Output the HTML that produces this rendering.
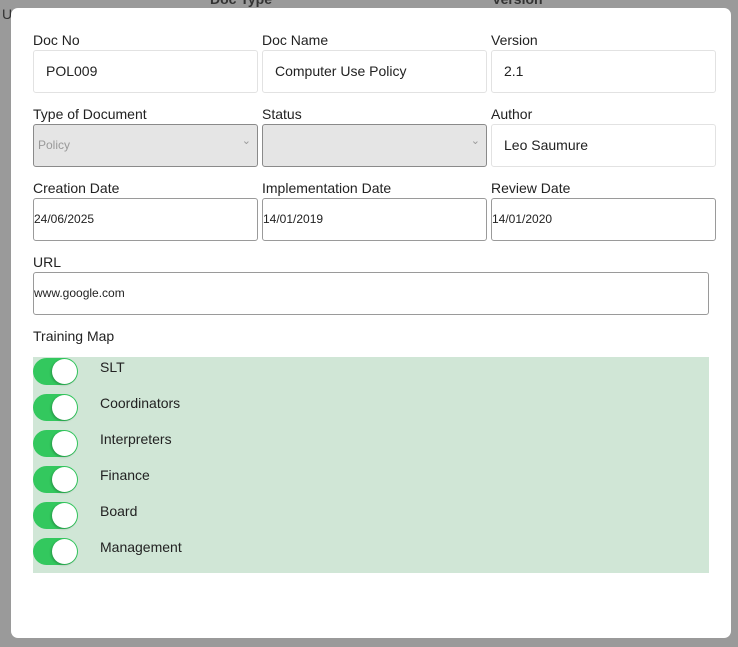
<!DOCTYPE html>
<html><head><style>
*{box-sizing:border-box;margin:0;padding:0}
body{width:738px;height:647px;background:#9a9a9a;font-family:"Liberation Sans",sans-serif;position:relative;overflow:hidden;color:#222}
.bg{position:absolute;font-size:14px;color:#333}
.modal{position:absolute;left:11px;top:8px;width:720px;height:630px;background:#fff;border-radius:7px}
.l{position:absolute;font-size:14px;color:#222}
.i{position:absolute;height:43px;border:1px solid #e2e2e2;border-radius:3px;font-size:14px;padding-left:12px;line-height:41px;background:#fff}
.d{border-color:#9a9a9a;padding-left:0;font-size:12px}
.s{background:#e5e5e5;border-color:#8a8a8a;color:#999;font-size:12px;padding-left:4px}
.s:after{content:"⌄";position:absolute;right:6px;top:-4px;font-size:11px;color:#999}
.g{position:absolute;left:22px;top:349px;width:676px;height:216px;background:#d0e6d6}
.t{position:absolute;left:0;width:45px;height:27px;border-radius:14px;background:#33c85e}
.t:after{content:"";position:absolute;right:1px;top:1px;width:25px;height:25px;border-radius:50%;background:#fff;box-shadow:-1px 1px 2px rgba(0,0,0,.25)}
.tl{position:absolute;left:67px;font-size:14px;color:#222}
</style></head><body>
<div class="bg" style="left:2px;top:6px">U</div>
<div class="bg" style="left:210px;top:-9px;font-weight:bold">Doc Type</div>
<div class="bg" style="left:492px;top:-9px;font-weight:bold">Version</div>
<div class="modal">
<div class="l" style="left:22px;top:24px">Doc No</div>
<div class="l" style="left:251px;top:24px">Doc Name</div>
<div class="l" style="left:480px;top:24px">Version</div>
<div class="i" style="left:22px;top:42px;width:225px">POL009</div>
<div class="i" style="left:251px;top:42px;width:225px">Computer Use Policy</div>
<div class="i" style="left:480px;top:42px;width:225px">2.1</div>
<div class="l" style="left:22px;top:98px">Type of Document</div>
<div class="l" style="left:251px;top:98px">Status</div>
<div class="l" style="left:480px;top:98px">Author</div>
<div class="i s" style="left:22px;top:116px;width:225px">Policy</div>
<div class="i s" style="left:251px;top:116px;width:225px"></div>
<div class="i" style="left:480px;top:116px;width:225px">Leo Saumure</div>
<div class="l" style="left:22px;top:172px">Creation Date</div>
<div class="l" style="left:251px;top:172px">Implementation Date</div>
<div class="l" style="left:480px;top:172px">Review Date</div>
<div class="i d" style="left:22px;top:190px;width:225px">24/06/2025</div>
<div class="i d" style="left:251px;top:190px;width:225px">14/01/2019</div>
<div class="i d" style="left:480px;top:190px;width:225px">14/01/2020</div>
<div class="l" style="left:22px;top:246px">URL</div>
<div class="i d" style="left:22px;top:264px;width:676px">www.google.com</div>
<div class="l" style="left:22px;top:320px">Training Map</div>
<div class="g">
<div class="t" style="top:1px"></div><div class="tl" style="top:2px">SLT</div>
<div class="t" style="top:37px"></div><div class="tl" style="top:38px">Coordinators</div>
<div class="t" style="top:73px"></div><div class="tl" style="top:74px">Interpreters</div>
<div class="t" style="top:109px"></div><div class="tl" style="top:110px">Finance</div>
<div class="t" style="top:145px"></div><div class="tl" style="top:146px">Board</div>
<div class="t" style="top:181px"></div><div class="tl" style="top:182px">Management</div>
</div>
</div>
</body></html>
